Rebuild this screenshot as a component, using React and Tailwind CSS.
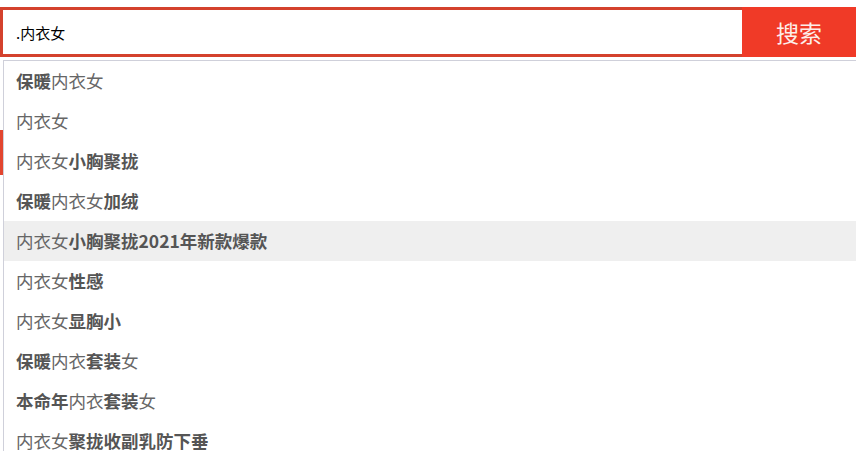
const suggestions = [
  [['保暖', true], ['内衣女', false]],
  [['内衣女', false]],
  [['内衣女', false], ['小胸聚拢', true]],
  [['保暖', true], ['内衣女', false], ['加绒', true]],
  [['内衣女', false], ['小胸聚拢2021年新款爆款', true]],
  [['内衣女', false], ['性感', true]],
  [['内衣女', false], ['显胸小', true]],
  [['保暖', true], ['内衣', false], ['套装', true], ['女', false]],
  [['本命年', true], ['内衣', false], ['套装', true], ['女', false]],
  [['内衣女', false], ['聚拢收副乳防下垂', true]],
];

const font = { fontFamily: '"Noto Sans CJK SC", "Noto Sans", sans-serif' };

export default function App() {
  return (
    <div className="relative w-[856px] h-[451px] overflow-hidden bg-white pt-[7px]" style={font}>
      {/* page red strip peeking behind dropdown */}
      <div className="absolute left-0 top-[130px] w-[3px] h-[45px] bg-[#e2452f]" />

      {/* search bar */}
      <div className="flex h-[50px]">
        <div className="flex-1 flex items-center border-[3px] border-r-0 border-[#d4412d] pl-[13px]">
          <span className="text-[15px] text-black leading-none">.内衣女</span>
        </div>
        <button className="w-[114px] bg-[#f03a27] text-[#fdeeea] text-[23px] leading-none flex items-center justify-center">
          搜索
        </button>
      </div>

      {/* dropdown */}
      <div className="relative mt-[3px] ml-[3px] border-l border-t border-[#cfd0da] bg-white">
        {suggestions.map((row, i) => (
          <div
            key={i}
            className={`h-[40px] flex items-center pl-[12px] text-[17.5px] text-[#666] ${i === 4 ? 'bg-[#efefef]' : ''}`}
          >
            {row.map(([t, b], j) => (
              <span key={j} className={b ? 'font-bold text-[#555]' : ''}>{t}</span>
            ))}
          </div>
        ))}
      </div>
    </div>
  );
}
